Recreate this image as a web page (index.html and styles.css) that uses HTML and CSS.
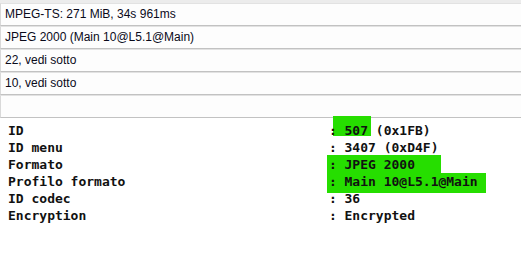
FILE: index.html
```html
<!DOCTYPE html>
<html lang="it">
    <head>
        <meta charset="UTF-8">
        <link rel="stylesheet" href="styles.css">
        <title>MediaInfo</title>
    </head>
    <body>
        <div class="fields">
            <div class="field">MPEG-TS: 271 MiB, 34s 961ms</div>
            <div class="field">JPEG 2000 (Main 10@L5.1@Main)</div>
            <div class="field">22, vedi sotto</div>
            <div class="field">10, vedi sotto</div>
            <div class="field"></div>
        </div>

        <div class="report">
            <span class="mark mark-id"></span>
            <span class="mark mark-format"></span>
            <span class="mark mark-profile"></span>
<pre class="report-text">ID                                       : 507 (0x1FB)
ID menu                                  : 3407 (0xD4F)
Formato                                  : JPEG 2000
Profilo formato                          : Main 10@L5.1@Main
ID codec                                 : 36
Encryption                               : Encrypted</pre>
        </div>
    </body>
</html>
```

FILE: styles.css
```css
body,
html {
    margin: 0;
    width: 100%;
    height: 100%;
    background: #fff;
}

body {
    display: flex;
    flex-direction: column;
}

.fields {
    background: #ececec;
    padding-top: 3px;
}

.field {
    height: 21px;
    line-height: 21px;
    padding-left: 4px;
    border-left: 1px solid #d9d9d9;
    border-top: 1px solid #e2e2e2;
    border-bottom: 1px solid #c2c2c2;
    background: #fdfdfd;
    font-family: "Liberation Sans", Arial, sans-serif;
    font-size: 12px;
    color: #0a0a1a;
    white-space: nowrap;
}

.report {
    flex-grow: 1;
    position: relative;
    padding: 4px 0 0 8px;
}

.report-text {
    margin: 0;
    position: relative;
    font-family: "DejaVu Sans Mono", monospace;
    font-size: 13px;
    font-weight: bold;
    line-height: 17px;
    color: #111;
}

.mark {
    position: absolute;
    background: #26de00;
}

.mark-id {
    left: 333px;
    top: -2px;
    width: 38px;
    height: 20px;
}

.mark-format {
    left: 327px;
    top: 37px;
    width: 114px;
    height: 18px;
}

.mark-profile {
    left: 327px;
    top: 55px;
    width: 159px;
    height: 20px;
}
```
